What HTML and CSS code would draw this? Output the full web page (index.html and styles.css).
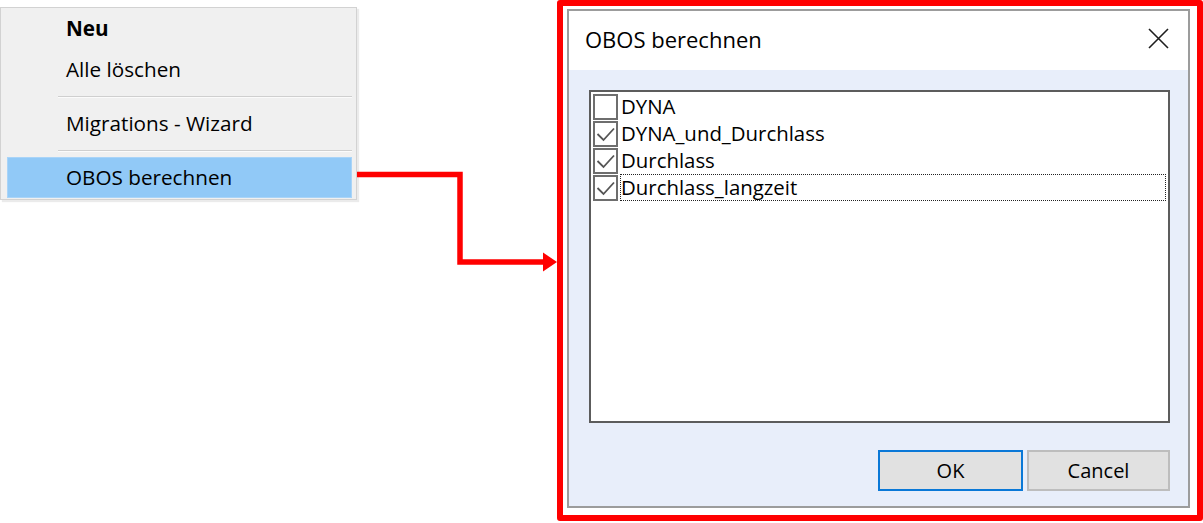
FILE: index.html
```html
<!DOCTYPE html>
<html lang="de">
<head>
    <meta charset="UTF-8">
    <title>OBOS berechnen</title>
    <link rel="stylesheet" href="styles.css">
</head>
<body>
    <div class="scene">
        <!-- Kontextmenü -->
        <div class="menu">
            <div class="menu-item bold">Neu</div>
            <div class="menu-item">Alle löschen</div>
            <div class="menu-sep"></div>
            <div class="menu-item">Migrations - Wizard</div>
            <div class="menu-sep"></div>
            <div class="menu-item active">OBOS berechnen</div>
        </div>

        <!-- Pfeil vom Menüpunkt zum Dialog -->
        <svg class="connector" width="200" height="280" viewBox="0 0 200 280">
            <path d="M0 174.5 H103 V262 H190" fill="none" stroke="#ff0000" stroke-width="5.5" stroke-linejoin="miter"/>
            <polygon points="186,252.5 200,262 186,271.5" fill="#ff0000"/>
        </svg>

        <div class="callout">
            <div class="dialog">
                <div class="titlebar">
                    <span class="title">OBOS berechnen</span>
                    <svg class="close" width="21" height="21" viewBox="0 0 21 21">
                        <path d="M1 1 L20 20 M20 1 L1 20" stroke="#1e1e1e" stroke-width="1.6"/>
                    </svg>
                </div>
                <div class="client">
                    <div class="listbox">
                        <div class="row">
                            <span class="check"></span>
                            <span class="label">DYNA</span>
                        </div>
                        <div class="row">
                            <span class="check"><svg width="21" height="22" viewBox="0 0 21 22"><path d="M2.5 11 L8.5 17 L19 5.5" fill="none" stroke="#555" stroke-width="1.8"/></svg></span>
                            <span class="label">DYNA_und_Durchlass</span>
                        </div>
                        <div class="row">
                            <span class="check"><svg width="21" height="22" viewBox="0 0 21 22"><path d="M2.5 11 L8.5 17 L19 5.5" fill="none" stroke="#555" stroke-width="1.8"/></svg></span>
                            <span class="label">Durchlass</span>
                        </div>
                        <div class="row">
                            <span class="check"><svg width="21" height="22" viewBox="0 0 21 22"><path d="M2.5 11 L8.5 17 L19 5.5" fill="none" stroke="#555" stroke-width="1.8"/></svg></span>
                            <span class="label focused">Durchlass_langzeit</span>
                        </div>
                    </div>
                    <div class="buttons">
                        <button class="btn default">OK</button>
                        <button class="btn">Cancel</button>
                    </div>
                </div>
            </div>
        </div>
    </div>
</body>
</html>
```
FILE: styles.css
```css
* {
    margin: 0;
    padding: 0;
    box-sizing: border-box;
}

body {
    font-family: 'Open Sans', 'Noto Sans', sans-serif;
    background: #fff;
    color: #000;
    width: 1203px;
    height: 523px;
    overflow: hidden;
}

.scene {
    display: flex;
    align-items: flex-start;
}

/* context menu */
.menu {
    width: 357px;
    flex: none;
    margin-top: 7px;
    background: #f0f0f0;
    border: 1px solid #d2d2d2;
    padding: 0 4px 1px 6px;
    box-shadow: 2px 2px 1px rgba(0, 0, 0, 0.08);
    font-size: 20.7px;
}

.menu-item {
    height: 41px;
    line-height: 38px;
    padding-left: 58px;
    border: 1px solid transparent;
}

.menu-item.bold {
    font-weight: 700;
}

.menu-item.active {
    background: #91c9f7;
    border-color: #a9d4f8;
}

.menu-sep {
    height: 13px;
    display: flex;
    flex-direction: column;
    justify-content: center;
    margin-left: 51px;
}

.menu-sep::before {
    content: '';
    height: 1px;
    background: #cfcfcf;
    border-bottom: 1px solid #fbfbfb;
    box-sizing: content-box;
}

.connector {
    flex: none;
    display: block;
}

/* red frame around dialog */
.callout {
    width: 646px;
    height: 521px;
    flex: none;
    border: 6px solid #ff0000;
    border-radius: 3px;
    padding: 3px 7px 7px 4px;
    display: flex;
}

.dialog {
    flex: 1;
    display: flex;
    flex-direction: column;
    border: 2px solid #9c9c9c;
    background: #fff;
}

.titlebar {
    height: 59px;
    display: flex;
    align-items: center;
    justify-content: space-between;
    padding: 0 19px 3px 16px;
    background: #fff;
}

.title {
    font-size: 22px;
}

.close {
    display: block;
    margin-bottom: 2px;
}

.client {
    flex: 1;
    background: #e8eefa;
    padding: 20px 18px 15px 20px;
    display: flex;
    flex-direction: column;
}

.listbox {
    height: 333px;
    background: #fff;
    border: 2px solid #5c5c5c;
    padding: 1px 2px;
}

.row {
    height: 27px;
    display: flex;
    align-items: center;
    font-size: 20.4px;
}

.check {
    flex: none;
    width: 25px;
    height: 26px;
    border: 2px solid #6e6e6e;
    background: #fff;
    display: flex;
    align-items: center;
    justify-content: center;
}

.check svg {
    display: block;
}

.label {
    flex: 1;
    height: 27px;
    line-height: 24px;
    margin-left: 2px;
    border: 1px solid transparent;
}

.label.focused {
    border: 1px dotted #222;
}

.buttons {
    margin-top: 27px;
    display: flex;
    justify-content: flex-end;
    gap: 4px;
}

.btn {
    width: 143px;
    height: 41px;
    font-family: inherit;
    font-size: 20px;
    color: #000;
    background: #e1e1e1;
    border: 2px solid #bdbdbd;
}

.btn.default {
    width: 145px;
    border-color: #0a78d7;
}
```
